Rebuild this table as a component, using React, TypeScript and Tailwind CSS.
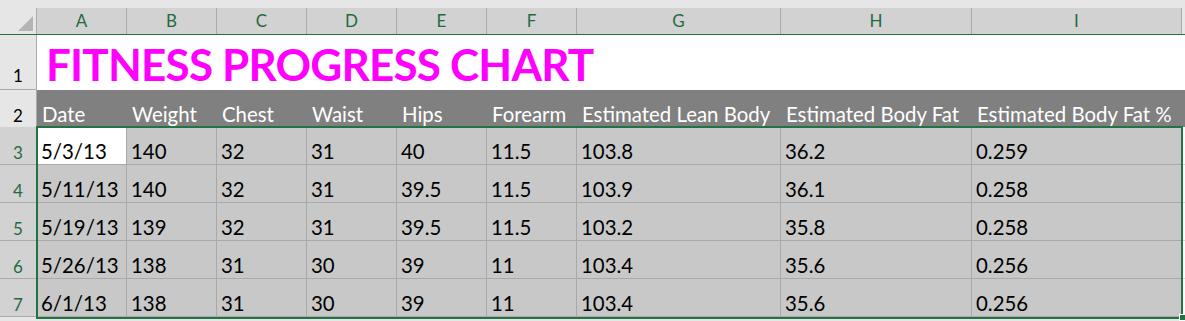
const COLS = ["A", "B", "C", "D", "E", "F", "G", "H", "I"];

const HEADINGS = [
  "Date",
  "Weight",
  "Chest",
  "Waist",
  "Hips",
  "Forearm",
  "Estimated Lean Body",
  "Estimated Body Fat",
  "Estimated Body Fat %",
];

const ROWS = [
  ["5/3/13", "140", "32", "31", "40", "11.5", "103.8", "36.2", "0.259"],
  ["5/11/13", "140", "32", "31", "39.5", "11.5", "103.9", "36.1", "0.258"],
  ["5/19/13", "139", "32", "31", "39.5", "11.5", "103.2", "35.8", "0.258"],
  ["5/26/13", "138", "31", "30", "39", "11", "103.4", "35.6", "0.256"],
  ["6/1/13", "138", "31", "30", "39", "11", "103.4", "35.6", "0.256"],
];

const grid =
  "grid grid-cols-[37px_90px_90px_90px_90px_90px_90px_204px_191px_210px_1fr]";

export default function App() {
  return (
    <div className="relative h-[321px] w-[1185px] overflow-hidden bg-[#e6e6e6] font-['Lato','Open_Sans',sans-serif] text-black">
      <div className="h-2" />

      {/* column letters */}
      <div className={`${grid} h-[27px] border-b-2 border-[#217346]`}>
        <div className="relative border-r border-[#ababab] bg-[#e6e6e6]">
          <svg className="absolute right-[3px] bottom-[3px]" width="15" height="15" viewBox="0 0 15 15">
            <polygon points="15,0 15,15 0,15" fill="#b4b4b4" />
          </svg>
        </div>
        {COLS.map((c) => (
          <div
            key={c}
            className="flex items-center justify-center border-r border-[#ababab] bg-[#d2d2d2] text-[17px] text-[#1e6b3e]"
          >
            {c}
          </div>
        ))}
        <div className="bg-[#e6e6e6]" />
      </div>

      {/* row 1: title */}
      <div className={`${grid} h-[55px]`}>
        <div className="flex items-end justify-center border-r border-b border-[#ababab] bg-[#e6e6e6] pb-[5px] text-[17px] leading-none">
          1
        </div>
        <div className="col-span-10 flex items-end bg-white pl-[9px] pb-[4px]">
          <span className="text-[44px] leading-none font-bold tracking-[-0.8px] text-[#ff00ff]">
            FITNESS PROGRESS CHART
          </span>
        </div>
      </div>

      {/* row 2: headings */}
      <div className={`${grid} h-[37px]`}>
        <div className="flex items-end justify-center border-r border-[#ababab] bg-[#e6e6e6] pb-[3px] text-[17px] leading-none">
          2
        </div>
        {HEADINGS.map((h) => (
          <div
            key={h}
            className="flex items-end bg-[#808080] pb-[3px] pl-[5px] text-[20.4px] leading-none whitespace-nowrap text-white"
          >
            {h}
          </div>
        ))}
        <div className="bg-[#808080]" />
      </div>

      {/* data rows */}
      {ROWS.map((row, r) => (
        <div key={r} className={`${grid} h-[38px]`}>
          <div className="flex items-end justify-center border-r border-b border-[#ababab] bg-[#d2d2d2] pb-[3px] text-[17px] leading-none text-[#1e6b3e]">
            {r + 3}
          </div>
          {row.map((v, i) => (
            <div
              key={i}
              className={[
                "flex items-end border-r border-b border-[#a9a9a9] pb-[3px] pl-[4px] text-[20.4px] leading-none whitespace-nowrap",
                r === 0 && i === 0 ? "bg-white" : "bg-[#c8c8c8]",
              ].join(" ")}
            >
              {v}
            </div>
          ))}
          <div className="border-b border-[#d4d4d4] bg-white" />
        </div>
      ))}

      {/* selection A3:I7 */}
      <div className="pointer-events-none absolute top-[126px] left-[36px] h-[193px] w-[1147px] border-2 border-[#217346]" />
      <div className="absolute top-[314px] left-[1179px] h-[7px] w-[7px] border border-white bg-[#217346]" />
    </div>
  );
}
